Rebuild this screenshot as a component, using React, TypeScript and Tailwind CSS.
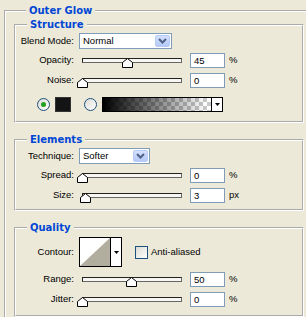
import type { ReactNode } from "react";

const LABEL = "w-[58px] shrink-0 text-right";

function Group({ title, className, children }: { title: string; className: string; children: ReactNode }) {
  return (
    <fieldset className={`w-[290px] border-2 border-white [border-style:groove] ${className}`}>
      <legend className="ml-[11px] px-[3px] text-[10px] leading-[12px] font-bold text-[#0046d5] font-['DejaVu_Sans',sans-serif]">
        {title}
      </legend>
      {children}
    </fieldset>
  );
}

function Thumb({ left }: { left: number }) {
  return (
    <svg className="absolute top-0" style={{ left: left - 5 }} width="11" height="10" viewBox="0 0 11 10">
      <path d="M0.5 9.5 V4.5 L5.5 0.5 L10.5 4.5 V9.5 Z" fill="#fff" stroke="#000" />
    </svg>
  );
}

function SliderRow({ label, value, pos, unit, className }: { label: string; value: string; pos: number; unit: string; className: string }) {
  return (
    <div className={`flex h-[15px] items-center ${className}`}>
      <span className={LABEL}>{label}</span>
      <div className="relative ml-[8px] h-[15px] w-[100px] self-start pt-[5px]">
        <div className="h-[5px] w-full border border-t-[#222] border-l-[#222] border-r-[#666] border-b-[#666] bg-[#f7f6f1]" />
        <div className="absolute inset-x-0 top-[5px]">
          <Thumb left={pos} />
        </div>
      </div>
      <div className="ml-[8px] h-[15px] w-[35px] border border-[#7f9db9] bg-white pl-[3px] leading-[13px]">{value}</div>
      <span className="ml-[4px]">{unit}</span>
    </div>
  );
}

function Chevron() {
  return (
    <div className="my-[1px] mr-[1px] flex w-[15px] items-center justify-center rounded-[2px] border border-[#b6cbf5] bg-[linear-gradient(#d4e0fd,#b5c9f7)]">
      <svg width="9" height="6" viewBox="0 0 9 6">
        <path d="M1 1 L4.5 4.5 L8 1" fill="none" stroke="#4d6185" strokeWidth="2" />
      </svg>
    </div>
  );
}

function Select({ text, width }: { text: string; width: string }) {
  return (
    <div className={`ml-[5px] flex h-[16px] border border-[#7f9db9] bg-white ${width}`}>
      <span className="flex-1 pl-[3px] leading-[14px]">{text}</span>
      <Chevron />
    </div>
  );
}

function Radio({ on }: { on?: boolean }) {
  return (
    <div className="flex h-[13px] w-[13px] items-center justify-center rounded-full border border-[#1c5180] bg-[linear-gradient(135deg,#dcdbd4,#fff)]">
      {on && <div className="h-[5px] w-[5px] rounded-full bg-[#21a121]" />}
    </div>
  );
}

function ArrowBtn({ h }: { h: string }) {
  return (
    <div className={`flex w-[11px] items-center justify-center border border-l-0 border-black bg-white ${h}`}>
      <svg width="5" height="3" viewBox="0 0 5 3">
        <path d="M0 0 H5 L2.5 3 Z" fill="#000" />
      </svg>
    </div>
  );
}

export default function App() {
  return (
    <div className="h-[317px] w-[306px] overflow-hidden bg-[#ece9d8] pl-[4px] pt-[5px] text-[9.5px] text-black font-['Liberation_Sans',Arial,sans-serif]">
      <fieldset className="h-[340px] w-[320px] border-2 border-white pl-[8px] [border-style:groove]">
        <legend className="ml-[12px] px-[3px] text-[10px] leading-[12px] font-bold text-[#0046d5] font-['DejaVu_Sans',sans-serif]">
          Outer Glow
        </legend>

        <Group title="Structure" className="mt-[2px] pb-[9px]">
          <div className="mt-[2px] flex h-[16px] items-center">
            <span className={LABEL}>Blend Mode:</span>
            <Select text="Normal" width="w-[93px]" />
          </div>
          <SliderRow label="Opacity:" value="45" pos={45} unit="%" className="mt-[4px]" />
          <SliderRow label="Noise:" value="0" pos={0} unit="%" className="mt-[5px]" />
          <div className="mt-[9px] flex h-[15px] items-center">
            <div className="ml-[21px]">
              <Radio on />
            </div>
            <div className="ml-[5px] h-[15px] w-[16px] border border-[#333] bg-[#141414]" />
            <div className="ml-[13px]">
              <Radio />
            </div>
            <div className="ml-[5px] flex h-[15px]">
              <div className="h-[15px] w-[110px] border border-black [background:linear-gradient(to_right,#000,rgba(0,0,0,0)_96%),conic-gradient(#c8c8c8_25%,#fff_0_50%,#c8c8c8_0_75%,#fff_0)_0_0/8px_8px]" />
              <ArrowBtn h="h-[15px]" />
            </div>
          </div>
        </Group>

        <Group title="Elements" className="mt-[11px] pb-[6px]">
          <div className="mt-[2px] flex h-[16px] items-center">
            <span className={LABEL}>Technique:</span>
            <Select text="Softer" width="w-[71px]" />
          </div>
          <SliderRow label="Spread:" value="0" pos={0} unit="%" className="mt-[4px]" />
          <SliderRow label="Size:" value="3" pos={3} unit="px" className="mt-[5px]" />
        </Group>

        <Group title="Quality" className="mt-[11px] pb-[8px]">
          <div className="mt-[3px] flex h-[30px] items-center">
            <span className={LABEL}>Contour:</span>
            <div className="ml-[5px] flex h-[30px]">
              <svg className="border border-black" width="32" height="30" viewBox="0 0 30 28" preserveAspectRatio="none">
                <polygon points="0,0 30,0 0,28" fill="#fff" />
                <polygon points="30,0 30,28 0,28" fill="#b1ad9f" />
              </svg>
              <ArrowBtn h="h-[30px]" />
            </div>
            <div className="ml-[13px] h-[13px] w-[13px] border border-[#1c5180] bg-[linear-gradient(135deg,#dcdbd4,#fff)]" />
            <span className="ml-[3px]">Anti-aliased</span>
          </div>
          <SliderRow label="Range:" value="50" pos={49} unit="%" className="mt-[5px]" />
          <SliderRow label="Jitter:" value="0" pos={0} unit="%" className="mt-[5px]" />
        </Group>
      </fieldset>
    </div>
  );
}
